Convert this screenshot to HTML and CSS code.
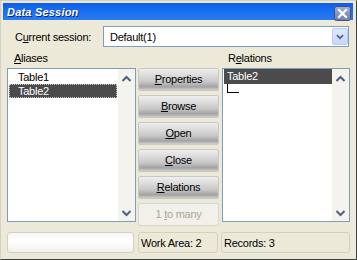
FILE: index.html
```html
<!DOCTYPE html>
<html>
<head>
<meta charset="utf-8">
<link rel="stylesheet" href="styles.css">
</head>
<body>
<div class="window">
  <div class="titlebar">
    <span class="title">Data Session</span>
    <span class="close">
      <svg width="17" height="15" viewBox="0 0 17 15">
        <defs>
          <linearGradient id="cg" x1="0" y1="0" x2="0" y2="1">
            <stop offset="0" stop-color="#a3aed0"/>
            <stop offset="1" stop-color="#6f7fad"/>
          </linearGradient>
        </defs>
        <rect x="0.5" y="0.5" width="16" height="14" rx="2" fill="url(#cg)" stroke="#3e4f82"/>
        <path d="M5 4 L12 11 M12 4 L5 11" stroke="#fff" stroke-width="2.2" stroke-linecap="square"/>
      </svg>
    </span>
  </div>
  <div class="content">
    <div class="session-row">
      <span class="session-label">C<u>u</u>rrent session:</span>
      <div class="combo">
        <span class="combo-text">Default(1)</span>
        <span class="drop">
          <svg width="16" height="17" viewBox="0 0 16 17">
            <path d="M4.5 7 L8 10.5 L11.5 7" fill="none" stroke="#4d6185" stroke-width="2"/>
          </svg>
        </span>
      </div>
    </div>
    <div class="labels-row">
      <span class="lbl-aliases"><u>A</u>liases</span>
      <span class="lbl-relations">R<u>e</u>lations</span>
    </div>
    <div class="main-row">
      <div class="list aliases">
        <div class="items">
          <div class="item">Table1</div>
          <div class="item selected"><span class="focus">Table2</span></div>
        </div>
        <div class="scroll">
          <svg width="17" height="10" viewBox="0 0 17 10"><path d="M4.5 7 L8.5 3 L12.5 7" fill="none" stroke="#4d6185" stroke-width="2"/></svg>
          <svg width="17" height="10" viewBox="0 0 17 10"><path d="M4.5 3 L8.5 7 L12.5 3" fill="none" stroke="#4d6185" stroke-width="2"/></svg>
        </div>
      </div>
      <div class="buttons">
        <div class="btn"><span><u>P</u>roperties</span></div>
        <div class="btn"><span><u>B</u>rowse</span></div>
        <div class="btn"><span><u>O</u>pen</span></div>
        <div class="btn"><span><u>C</u>lose</span></div>
        <div class="btn"><span><u>R</u>elations</span></div>
        <div class="btn disabled"><span>1 <u>t</u>o many</span></div>
      </div>
      <div class="list relations">
        <div class="items">
          <div class="item tree-sel">Table2</div>
          <div class="tree-line"></div>
        </div>
        <div class="scroll">
          <svg width="17" height="10" viewBox="0 0 17 10"><path d="M4.5 7 L8.5 3 L12.5 7" fill="none" stroke="#4d6185" stroke-width="2"/></svg>
          <svg width="17" height="10" viewBox="0 0 17 10"><path d="M4.5 3 L8.5 7 L12.5 3" fill="none" stroke="#4d6185" stroke-width="2"/></svg>
        </div>
      </div>
    </div>
    <div class="status">
      <div class="panel first"></div>
      <div class="panel work">Work Area: 2</div>
      <div class="panel records">Records: 3</div>
    </div>
  </div>
</div>
</body>
</html>
```

FILE: styles.css
```css
html, body {
  margin: 0;
  padding: 0;
  background: #ece9d8;
}

body {
  width: 357px;
  height: 260px;
  overflow: hidden;
  font-family: "Liberation Sans", Arial, sans-serif;
  font-size: 11px;
  letter-spacing: -0.25px;
  color: #000;
}

.window {
  width: 357px;
  height: 260px;
  box-sizing: border-box;
  border: 1px solid;
  border-color: #d4d0c8 #404040 #404040 #d4d0c8;
  padding: 2px 3px 2px 2px;
  background: #ece9d8;
  display: flex;
  flex-direction: column;
}

.titlebar {
  height: 17px;
  background: linear-gradient(to bottom, #0a5fe6 0%, #1c6ff0 50%, #2a7cf2 100%);
  display: flex;
  align-items: center;
  justify-content: space-between;
  padding: 0 2px 0 4px;
}

.title {
  font-family: "Liberation Sans", Arial, sans-serif;
  font-weight: bold;
  font-style: italic;
  font-size: 11px;
  color: #fff;
  text-shadow: 1px 1px 0 #0b2a7a;
  letter-spacing: 0.2px;
  line-height: 17px;
  padding-top: 1px;
}

.close {
  display: flex;
  margin-top: 3px;
}

.content {
  flex: 1;
  padding: 0 3px 0 4px;
  display: flex;
  flex-direction: column;
}

.session-row {
  margin-top: 6px;
  height: 21px;
  display: flex;
  align-items: center;
}

.session-label {
  width: 88px;
  padding-left: 8px;
}

.combo {
  width: 246px;
  height: 21px;
  box-sizing: border-box;
  border: 1px solid #7f9db9;
  background: #fff;
  display: flex;
  align-items: center;
  justify-content: space-between;
}

.combo-text {
  padding-left: 6px;
}

.drop {
  width: 16px;
  height: 17px;
  box-sizing: border-box;
  border: 1px solid #b7cdf5;
  border-radius: 2px;
  background: linear-gradient(to bottom, #dde8fd 0%, #c6d7fb 100%);
  display: flex;
  align-items: center;
  justify-content: center;
}

.drop svg {
  display: block;
}

.labels-row {
  margin-top: 5px;
  height: 13px;
  line-height: 13px;
  display: flex;
}

.lbl-aliases {
  width: 208px;
  padding-left: 7px;
}

.lbl-relations {
  padding-left: 6px;
}

.main-row {
  margin-top: 3px;
  display: flex;
  align-items: flex-start;
}

.list {
  height: 154px;
  box-sizing: border-box;
  border: 1px solid #7f9db9;
  background: #fff;
  display: flex;
}

.list.aliases {
  width: 129px;
  margin-right: 2px;
}

.list.relations {
  width: 128px;
  margin-left: 3px;
}

.items {
  flex: 1;
  padding: 1px;
}

.item {
  height: 14px;
  line-height: 14px;
  padding-left: 9px;
  white-space: nowrap;
}

.item.selected {
  background: #4b4b4b;
  color: #fff;
  padding: 0;
}

.focus {
  display: block;
  height: 14px;
  box-sizing: border-box;
  border: 1px dotted #c8c8c8;
  padding-left: 8px;
  line-height: 12px;
}

.relations .items {
  padding: 0 0 0 1px;
}

.item.tree-sel {
  background: #4b4b4b;
  color: #fff;
  padding-left: 3px;
  height: 15px;
  line-height: 15px;
}

.tree-line {
  width: 11px;
  height: 8px;
  margin-left: 3px;
  border-left: 1px solid #000;
  border-bottom: 1px solid #000;
}

.scroll {
  width: 17px;
  background: #f4f3ee;
  display: flex;
  flex-direction: column;
  justify-content: space-between;
  padding: 5px 0 3px;
}

.scroll svg {
  display: block;
}

.buttons {
  width: 81px;
  display: flex;
  flex-direction: column;
  gap: 4px;
}

.btn {
  height: 23px;
  box-sizing: border-box;
  border: 1px solid #c9c8c4;
  border-radius: 2px;
  background: linear-gradient(to bottom, #eeeeee 0%, #dcdcdc 30%, #c8c8c8 60%, #a2a2a2 85%, #cfcfcf 100%);
  display: flex;
  align-items: center;
  justify-content: center;
  line-height: 13px;
}

.btn.disabled {
  background: #f1f0ea;
  border-color: #d8d6cc;
  color: #aca899;
}

.status {
  margin-top: 6px;
  height: 21px;
  display: flex;
}

.panel {
  height: 21px;
  box-sizing: border-box;
  border: 1px solid #d3d0c2;
  border-radius: 3px;
  display: flex;
  align-items: center;
  padding-left: 2px;
  white-space: nowrap;
}

.panel.first {
  width: 127px;
  margin-right: 4px;
  background: linear-gradient(to bottom, #f6f6f4 0%, #ffffff 40%, #f0f0ec 100%);
}

.panel.work {
  width: 80px;
  margin-right: 3px;
}

.panel.records {
  width: 129px;
}
```
